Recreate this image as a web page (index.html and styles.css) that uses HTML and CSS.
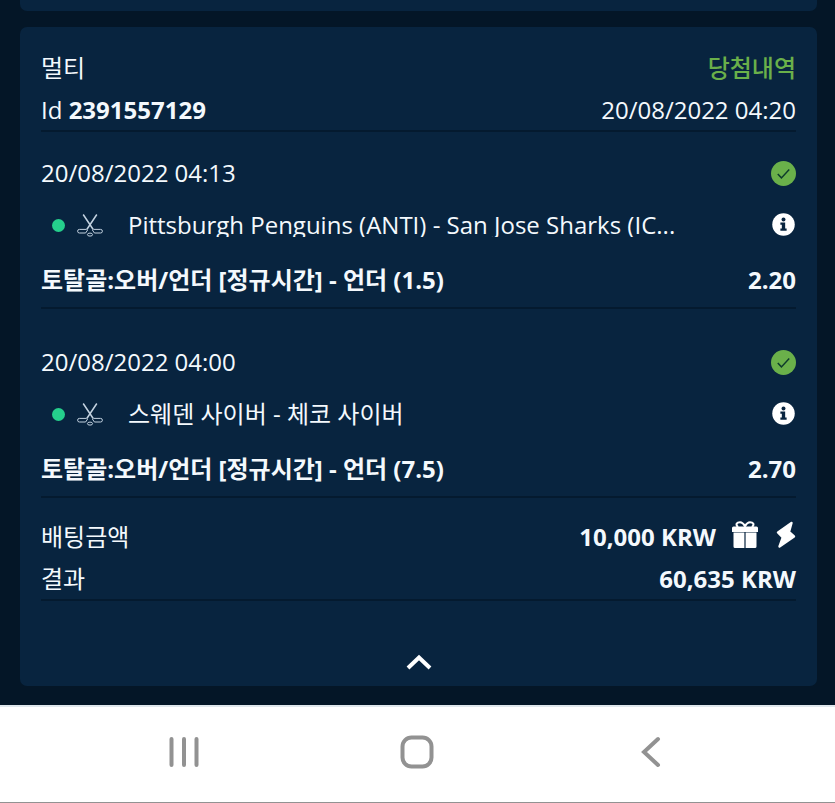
FILE: index.html
```html
<!DOCTYPE html>
<html lang="ko">
<head>
    <meta charset="UTF-8">
    <meta name="viewport" content="width=device-width, initial-scale=1.0">
    <title>배팅 내역</title>
    <link rel="stylesheet" href="styles.css">
</head>
<body>
    <svg class="sprite" aria-hidden="true">
        <symbol id="icon-check" viewBox="0 0 24 24">
            <circle cx="12" cy="12" r="12" fill="#6ab04a"/>
            <path d="M6.5 12.5l3.5 3.7 7.5-8" fill="none" stroke="#0d3a2c" stroke-width="1.4"/>
        </symbol>
        <symbol id="icon-info" viewBox="0 0 24 24">
            <circle cx="12" cy="12" r="10.8" fill="#fff"/>
            <circle cx="12" cy="7.2" r="1.9" fill="#08243f"/>
            <path d="M9 10h4.600v5.800H15V18H9v-2.200h1.400v-3.600H9z" fill="#08243f"/>
        </symbol>
        <symbol id="icon-hockey" viewBox="0 0 26 24">
            <g fill="none" stroke="#c3d2e0" stroke-width="1" stroke-linejoin="round">
                <path d="M6.200 1.500l10 15M19.800 1.500l-10 15" stroke-width="1.500"/>
                <path d="M9.600 16.400H2.400a1.700 1.700 0 0 0 0 3.600h6.200l2-3M16.400 16.400h7.200a1.700 1.700 0 0 1 0 3.600h-6.200l-2-3"/>
                <ellipse cx="13" cy="21.600" rx="2.600" ry="1.500"/>
            </g>
        </symbol>
    </svg>

    <main class="history">
        <div class="card card-prev"></div>

        <article class="card">
            <header class="section">
                <div class="row">
                    <span>멀티</span>
                    <span class="won">당첨내역</span>
                </div>
                <div class="row">
                    <span>Id <b>2391557129</b></span>
                    <time>20/08/2022 04:20</time>
                </div>
            </header>

            <section class="section leg">
                <div class="row leg-date">
                    <time>20/08/2022 04:13</time>
                    <svg class="icon"><use href="#icon-check"/></svg>
                </div>
                <div class="row leg-match">
                    <span class="dot"></span>
                    <svg class="sport"><use href="#icon-hockey"/></svg>
                    <span class="teams">Pittsburgh Penguins (ANTI) - San Jose Sharks (IC...</span>
                    <button class="info" type="button" aria-label="정보"><svg class="icon"><use href="#icon-info"/></svg></button>
                </div>
                <div class="row leg-pick">
                    <b>토탈골:오버/언더 [정규시간] - 언더 (1.5)</b>
                    <b>2.20</b>
                </div>
            </section>

            <section class="section leg">
                <div class="row leg-date">
                    <time>20/08/2022 04:00</time>
                    <svg class="icon"><use href="#icon-check"/></svg>
                </div>
                <div class="row leg-match">
                    <span class="dot"></span>
                    <svg class="sport"><use href="#icon-hockey"/></svg>
                    <span class="teams">스웨덴 사이버 - 체코 사이버</span>
                    <button class="info" type="button" aria-label="정보"><svg class="icon"><use href="#icon-info"/></svg></button>
                </div>
                <div class="row leg-pick">
                    <b>토탈골:오버/언더 [정규시간] - 언더 (7.5)</b>
                    <b>2.70</b>
                </div>
            </section>

            <section class="section summary">
                <div class="row">
                    <span>배팅금액</span>
                    <span class="stake">
                        <b>10,000 KRW</b>
                        <svg class="gift" viewBox="0 0 26 28">
                            <path d="M6 6C3 3 5 1.200 8 1.200c2.400 0 3.800 1.800 5 4 1.200-2.200 2.600-4 5-4 3 0 5 1.800 2 4.800" fill="none" stroke="#fff" stroke-width="2"/>
                            <path d="M1.500 5.500h23a1.500 1.500 0 0 1 1.500 1.500v4H0V7a1.500 1.500 0 0 1 1.500-1.500zM1.500 11.500h10.900v15.500H3a1.500 1.500 0 0 1-1.500-1.500zM13.600 11.500h10.900v14A1.500 1.500 0 0 1 23 27h-9.400z" fill="#fff"/>
                        </svg>
                        <svg class="bolt" viewBox="0 0 20 28">
                            <path d="M15.500 2L2 11.500l4.800 5L3.500 25.500 18 15.500l-5-4.500z" fill="#fff" stroke="#fff" stroke-width="2.400" stroke-linejoin="round"/>
                        </svg>
                    </span>
                </div>
                <div class="row">
                    <span>결과</span>
                    <b>60,635 KRW</b>
                </div>
            </section>

            <button class="collapse" type="button" aria-label="접기">
                <svg viewBox="0 0 26 16"><path d="M2 14L13 3.500 24 14" fill="none" stroke="#fff" stroke-width="4"/></svg>
            </button>
        </article>
    </main>

    <nav class="navbar">
        <button type="button" aria-label="최근 앱">
            <svg viewBox="0 0 36 36"><path d="M5.500 5v26M18 5v26M30.500 5v26" fill="none" stroke="#929292" stroke-width="4" stroke-linecap="round"/></svg>
        </button>
        <button type="button" aria-label="홈">
            <svg viewBox="0 0 36 36"><rect x="3.500" y="3.500" width="29" height="29" rx="9" fill="none" stroke="#929292" stroke-width="4"/></svg>
        </button>
        <button type="button" aria-label="뒤로">
            <svg viewBox="0 0 36 36"><path d="M25 5L11 18l14 13" fill="none" stroke="#929292" stroke-width="4" stroke-linecap="round"/></svg>
        </button>
    </nav>
</body>
</html>
```

FILE: styles.css
```css
* {
    box-sizing: border-box;
}
body {
    margin: 0;
    min-height: 100vh;
    display: flex;
    flex-direction: column;
    background-color: #041627;
    color: #f4f9fd;
    font-family: "Open Sans", "Noto Sans CJK KR", sans-serif;
    font-size: 24px;
    line-height: 36px;
}
button {
    padding: 0;
    border: none;
    background: none;
    cursor: pointer;
}
svg {
    display: block;
    flex: none;
}
.sprite {
    position: absolute;
    width: 0;
    height: 0;
}
.history {
    flex: 1;
    padding: 0 18px 19px 20px;
}
.card {
    padding: 20px 21px 0;
    border-radius: 7px;
    background-color: #08243f;
}
.card-prev {
    height: 11px;
    padding: 0;
    margin-bottom: 16px;
    border-radius: 0 0 7px 7px;
}
.section {
    border-bottom: 2px solid #041a2f;
}
.row {
    display: flex;
    align-items: center;
    justify-content: space-between;
    height: 42px;
}
.row + .row {
    height: 41px;
}
.won {
    color: #6ab04a;
    font-weight: 500;
}
.leg {
    padding-top: 17px;
}
.leg + .leg {
    padding-top: 29px;
}
.leg .leg-date {
    height: 48px;
}
.leg .leg-match {
    height: 55px;
}
.leg .leg-pick {
    height: 55px;
}
.icon {
    width: 25px;
    height: 25px;
}
.dot {
    flex: none;
    width: 13px;
    height: 13px;
    margin: 2px 12px 0 11px;
    border-radius: 50%;
    background-color: #25cf8c;
}
.sport {
    width: 26px;
    height: 24px;
    margin-right: 25px;
}
.teams {
    flex: 1;
    overflow: hidden;
    white-space: nowrap;
    text-overflow: ellipsis;
    line-height: 24px;
}
.summary {
    padding-top: 18px;
}
.stake {
    display: flex;
    align-items: center;
}
.gift {
    width: 26px;
    height: 28px;
    margin: 0 18px 4px 16px;
}
.bolt {
    width: 20px;
    height: 28px;
    margin-bottom: 4px;
}
.collapse {
    display: flex;
    justify-content: center;
    width: 100%;
    padding: 53px 0 16px;
}
.collapse svg {
    width: 26px;
    height: 16px;
}
.navbar {
    display: grid;
    grid-template-columns: repeat(3, 1fr);
    padding: 27px 8% 32px;
    border-top: 2px solid #dfe7ec;
    border-bottom: 1px solid #929292;
    background-color: #fff;
}
.navbar button {
    display: flex;
    justify-content: center;
}
.navbar svg {
    width: 36px;
    height: 36px;
}
```
